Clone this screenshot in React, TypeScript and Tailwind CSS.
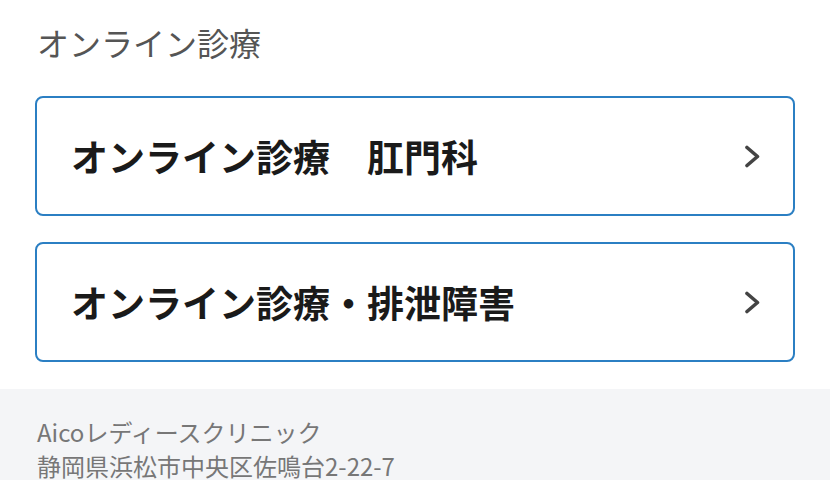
const items = ["オンライン診療　肛門科", "オンライン診療・排泄障害"];

function Chevron() {
  return (
    <svg width="17" height="23" viewBox="0 0 17 23" fill="none" className="text-[#444]">
      <polyline
        points="3,2.5 13.5,11.5 3,20.5"
        stroke="currentColor"
        strokeWidth="3.6"
        strokeLinecap="round"
        strokeLinejoin="round"
      />
    </svg>
  );
}

function MenuCard({ label }: { label: string }) {
  return (
    <a
      href="#"
      className="flex h-[120px] items-center justify-between rounded-lg border-2 border-[#2b7fc3] bg-white pl-[34px] pr-[32px]"
    >
      <span className="text-[37px] font-bold leading-none text-[#1a1a1a]">{label}</span>
      <Chevron />
    </a>
  );
}

export default function App() {
  return (
    <div
      className="min-h-[480px] w-[830px] bg-white"
      style={{ fontFamily: '"Noto Sans CJK JP", "Noto Sans", sans-serif' }}
    >
      <section className="px-[35px] pb-[27px] pt-[18px]">
        <h2 className="mb-[30px] pl-[2px] text-[32px] font-normal leading-[48px] text-[#555]">
          オンライン診療
        </h2>
        <div className="flex flex-col gap-[26px]">
          {items.map((item) => (
            <MenuCard key={item} label={item} />
          ))}
        </div>
      </section>
      <footer className="bg-[#f4f5f7] px-[37px] pb-6 pt-[26px] text-[24px] leading-[34px] text-[#777]">
        <p>Aicoレディースクリニック</p>
        <p>静岡県浜松市中央区佐鳴台2-22-7</p>
      </footer>
    </div>
  );
}
